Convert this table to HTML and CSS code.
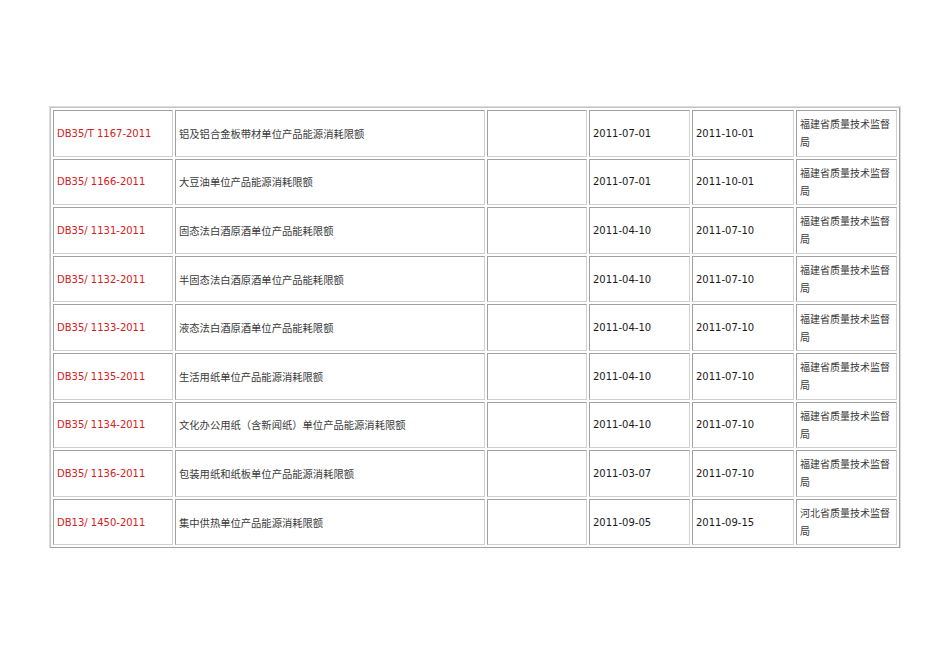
FILE: index.html
```html
<!DOCTYPE html>
<html lang="zh">
<head>
<meta charset="utf-8">
<title>地方标准</title>
<link rel="stylesheet" href="styles.css">
</head>
<body>
<table class="std">
  <colgroup>
    <col class="c1"><col class="c2"><col class="c3"><col class="c4"><col class="c5"><col class="c6">
  </colgroup>
  <tbody>
    <tr><td class="code">DB35/T 1167-2011</td><td class="name">铝及铝合金板带材单位产品能源消耗限额</td><td></td><td class="date">2011-07-01</td><td class="date">2011-10-01</td><td class="org">福建省质量技术监督局</td></tr>
    <tr><td class="code">DB35/ 1166-2011</td><td class="name">大豆油单位产品能源消耗限额</td><td></td><td class="date">2011-07-01</td><td class="date">2011-10-01</td><td class="org">福建省质量技术监督局</td></tr>
    <tr><td class="code">DB35/ 1131-2011</td><td class="name">固态法白酒原酒单位产品能耗限额</td><td></td><td class="date">2011-04-10</td><td class="date">2011-07-10</td><td class="org">福建省质量技术监督局</td></tr>
    <tr><td class="code">DB35/ 1132-2011</td><td class="name">半固态法白酒原酒单位产品能耗限额</td><td></td><td class="date">2011-04-10</td><td class="date">2011-07-10</td><td class="org">福建省质量技术监督局</td></tr>
    <tr><td class="code">DB35/ 1133-2011</td><td class="name">液态法白酒原酒单位产品能耗限额</td><td></td><td class="date">2011-04-10</td><td class="date">2011-07-10</td><td class="org">福建省质量技术监督局</td></tr>
    <tr><td class="code">DB35/ 1135-2011</td><td class="name">生活用纸单位产品能源消耗限额</td><td></td><td class="date">2011-04-10</td><td class="date">2011-07-10</td><td class="org">福建省质量技术监督局</td></tr>
    <tr><td class="code">DB35/ 1134-2011</td><td class="name">文化办公用纸（含新闻纸）单位产品能源消耗限额</td><td></td><td class="date">2011-04-10</td><td class="date">2011-07-10</td><td class="org">福建省质量技术监督局</td></tr>
    <tr><td class="code">DB35/ 1136-2011</td><td class="name">包装用纸和纸板单位产品能源消耗限额</td><td></td><td class="date">2011-03-07</td><td class="date">2011-07-10</td><td class="org">福建省质量技术监督局</td></tr>
    <tr><td class="code">DB13/ 1450-2011</td><td class="name">集中供热单位产品能源消耗限额</td><td></td><td class="date">2011-09-05</td><td class="date">2011-09-15</td><td class="org">河北省质量技术监督局</td></tr>
  </tbody>
</table>
</body>
</html>
```
FILE: styles.css
```css
html, body {
  margin: 0;
  padding: 0;
  background: #ffffff;
}
body {
  padding: 107px 0 0 50px;
  font-family: "DejaVu Sans", "Noto Sans CJK SC", sans-serif;
  color: #1a1a1a;
}
.std {
  table-layout: fixed;
  width: 850px;
  border-collapse: separate;
  border-spacing: 2px;
  border: 1px solid;
  border-color: #c4c4c4 #a0a0a0 #a0a0a0 #c4c4c4;
  box-shadow: 0 0 0 1px #dcdcdc;
}
.c1 { width: 120px; }
.c2 { width: 310px; }
.c3 { width: 100px; }
.c4 { width: 101px; }
.c5 { width: 102px; }
.c6 { width: 101px; }
.std td {
  box-sizing: border-box;
  height: 46.6px;
  padding: 0 3px;
  border: 1px solid;
  border-color: #a0a0a0 #d0d0d0 #d0d0d0 #a0a0a0;
  vertical-align: middle;
  font-size: 10px;
  line-height: 17px;
}
.std td.code {
  color: #d42020;
}
.std td.name {
  font-family: "Noto Sans CJK SC", sans-serif;
  font-size: 10.3px;
  color: #3a3a3a;
}
.std td.org {
  font-family: "Noto Sans CJK SC", sans-serif;
  font-size: 10px;
  color: #3a3a3a;
  line-height: 18px;
}
```
